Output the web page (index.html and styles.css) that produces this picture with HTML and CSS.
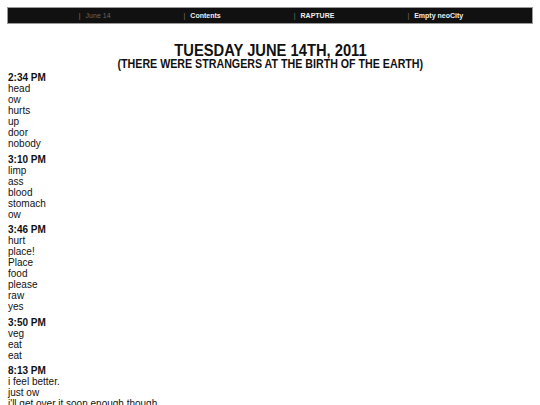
FILE: index.html
```html
<!DOCTYPE html>
<html>
<head>
<meta charset="utf-8">
<link rel="stylesheet" href="styles.css">
</head>
<body>
<div class="nav">
  <span class="nav-item dim">June 14</span>
  <span class="nav-item">Contents</span>
  <span class="nav-item">RAPTURE</span>
  <span class="nav-item">Empty neoCity</span>
</div>
<div class="title">
  <div class="title-main"><span class="squeeze main">TUESDAY JUNE 14TH, 2011</span></div>
  <div class="title-sub"><span class="squeeze sub">(THERE WERE STRANGERS AT THE BIRTH OF THE EARTH)</span></div>
</div>
<div class="entry">
  <div class="time">2:34 PM</div>
  <div>head</div><div>ow</div><div>hurts</div><div>up</div><div>door</div><div>nobody</div>
</div>
<div class="entry">
  <div class="time">3:10 PM</div>
  <div>limp</div><div>ass</div><div>blood</div><div>stomach</div><div>ow</div>
</div>
<div class="entry">
  <div class="time">3:46 PM</div>
  <div>hurt</div><div>place!</div><div>Place</div><div>food</div><div>please</div><div>raw</div><div>yes</div>
</div>
<div class="entry">
  <div class="time">3:50 PM</div>
  <div>veg</div><div>eat</div><div>eat</div>
</div>
<div class="entry">
  <div class="time">8:13 PM</div>
  <div>i feel better.</div><div>just ow</div><div>i'll get over it soon enough though.</div>
</div>
</body>
</html>
```
FILE: styles.css
```css
body {
  margin: 7px 7px 0 7px;
  background: #fff;
  color: #111;
  font-family: "Liberation Sans", Arial, sans-serif;
  font-size: 10px;
  line-height: 11px;
}
.nav {
  background: #111;
  border: 1px solid #9a9a9a;
  height: 15px;
  display: flex;
  align-items: center;
  justify-content: center;
  gap: 73px;
  padding-left: 2px;
}
.nav-item {
  font-size: 7px;
  font-weight: bold;
  color: #eee;
}
.nav-item::before {
  content: "|";
  color: #777;
  font-weight: normal;
  margin-right: 5px;
}
.nav-item.dim {
  color: #666;
  font-weight: normal;
}
.title {
  text-align: center;
  font-weight: bold;
  margin-top: 20px;
  margin-bottom: 2px;
}
.squeeze {
  display: inline-block;
  white-space: nowrap;
}
.title-main {
  font-size: 16px;
  line-height: 14px;
}
.squeeze.main {
  transform: scaleX(0.92);
}
.title-sub {
  font-size: 13px;
  line-height: 12px;
}
.squeeze.sub {
  transform: scaleX(0.82);
}
.entry {
  padding-left: 1px;
  margin-bottom: 4.5px;
}
.time {
  font-weight: bold;
}
```
